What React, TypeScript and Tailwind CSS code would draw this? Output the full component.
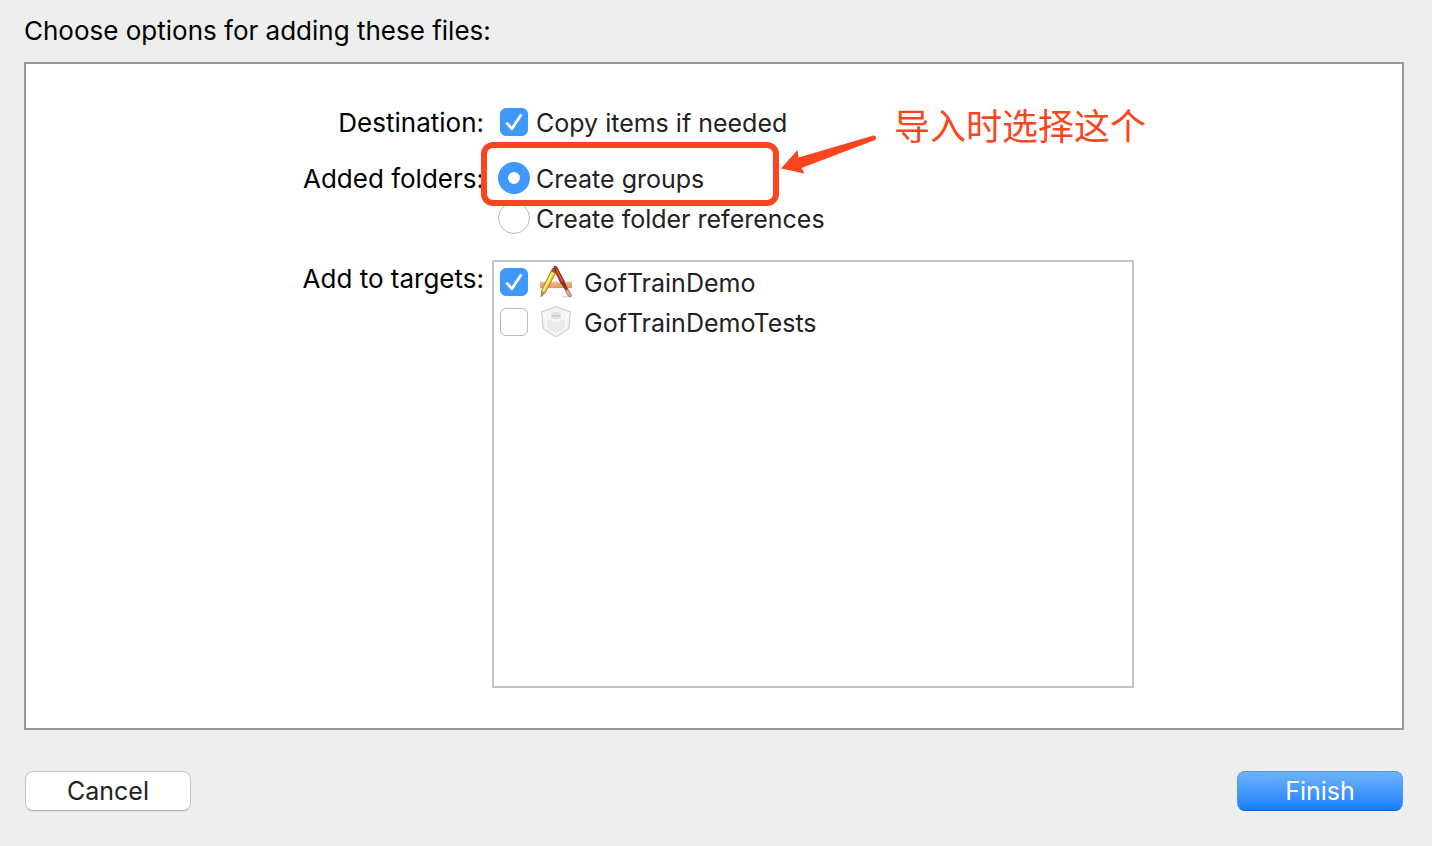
import React, { useState } from "react";

type CheckProps = {
  id: string;
  checked: boolean;
  onChange: (checked: boolean) => void;
};

function CheckBox({ id, checked, onChange }: CheckProps) {
  return (
    <span className="relative w-7 h-7 shrink-0">
      <input
        id={id}
        type="checkbox"
        checked={checked}
        onChange={(e) => onChange(e.target.checked)}
        className="block w-7 h-7 appearance-none rounded-md bg-white border border-[#b9b9b9] checked:bg-[#3f98fc] checked:border-[#3f98fc]"
      />
      {checked && (
        <svg viewBox="0 0 28 28" className="absolute inset-0 w-7 h-7 pointer-events-none" fill="none">
          <path d="M7.2 15.6 L12 20.8 L20.6 7.4" stroke="white" strokeWidth="2.8" strokeLinecap="round" strokeLinejoin="round" />
        </svg>
      )}
    </span>
  );
}

type RadioProps = {
  id: string;
  label: string;
  checked: boolean;
  onSelect: () => void;
};

function RadioRow({ id, label, checked, onSelect }: RadioProps) {
  return (
    <div className="flex items-center h-10 gap-1.5 pl-1.5">
      <input
        id={id}
        type="radio"
        name="added-folders"
        checked={checked}
        onChange={onSelect}
        className="w-8 h-8 shrink-0 appearance-none rounded-full bg-white border border-[#b9b9b9] checked:border-[10px] checked:border-[#3f98fc]"
      />
      <label htmlFor={id} className="pt-0.5 text-[#222]">{label}</label>
    </div>
  );
}

function AppIcon() {
  return (
    <svg viewBox="0 0 32 32" className="w-8 h-8 shrink-0" fill="none">
      <ellipse cx="26" cy="30.8" rx="5" ry="0.8" fill="#dedede" />
      <rect x="0" y="15.8" width="32.5" height="6.2" fill="#e2a678" />
      <path d="M0 16.6 H32" stroke="#eec09a" strokeWidth="1.4" />
      <path d="M0 21.6 H32" stroke="#cf9264" strokeWidth="0.8" />
      {/* pencil */}
      <path d="M11.4 4.6 L15.6 6.8 L5.4 26.6 L1.2 30.8 L1.6 24.6 Z" fill="#f4d53a" stroke="#8e6c1c" strokeWidth="0.8" strokeLinejoin="round" />
      <path d="M12.4 7 L3.2 25" stroke="#fff596" strokeWidth="1.2" />
      <path d="M14.8 7.8 L5 26" stroke="#c99a20" strokeWidth="0.7" />
      <path d="M11.4 4.6 L12.6 2.4 C14 1.6 16 2.6 16.4 4.4 L15.6 6.8 Z" fill="#c4583e" stroke="#7c3424" strokeWidth="0.6" />
      <path d="M1.6 25 L5.2 26.8 L1.2 30.8 Z" fill="#b98c5c" />
      {/* brush */}
      <path d="M14.2 0.2 L16.6 0.8 L24.4 15.6 L21 17.6 L15.4 5.6 Z" fill="#bd2d18" stroke="#64200f" strokeWidth="0.8" strokeLinejoin="round" />
      <path d="M16.6 4 L22.4 15.4" stroke="#ee7c5c" strokeWidth="0.9" />
      <path d="M21 17.6 L24.4 15.6 L28.2 23.4 L25.6 24.8 Z" fill="#8c2c1c" />
      <path d="M25.4 24.8 L28.4 23.2 L31.4 29 L30.8 31 L28.2 30 Z" fill="#dba48e" stroke="#a0644c" strokeWidth="0.7" />
    </svg>
  );
}

function TestsIcon() {
  return (
    <svg viewBox="0 0 32 32" className="w-8 h-8 shrink-0" fill="none">
      <path d="M16 0.6 L30.6 5.8 L28.8 22.6 L16 31 L3.2 22.6 L1.4 5.8 Z" fill="#f1f1f1" stroke="#c8c8c8" strokeWidth="1" strokeLinejoin="round" />
      <path d="M16 2 L28.6 6.6 L25.4 13.2 L16 16.8 L6.6 13.2 L3.4 6.6 Z" fill="#f4f4f4" />
      <path d="M6.6 13.2 L16 16.8 L25.4 13.2 L26.4 21.8 L16 28.6 L5.6 21.8 Z" fill="#ebebeb" />
      <path d="M3 7 L6.6 13.4 L5.6 21.8 L16 28.6 L26.4 21.8 L25.4 13.4 L29 7" stroke="#fcfcfc" strokeWidth="1.2" strokeLinejoin="round" />
      <ellipse cx="16" cy="9.4" rx="4.6" ry="3" fill="#e4e4e4" stroke="#d4d4d4" strokeWidth="0.7" />
      <path d="M12 9.8 H20" stroke="#c2c2c2" strokeWidth="1.2" />
    </svg>
  );
}

export default function App() {
  const [copyItems, setCopyItems] = useState(true);
  const [folderMode, setFolderMode] = useState("groups");
  const [targets, setTargets] = useState([
    { name: "GofTrainDemo", checked: true, icon: <AppIcon /> },
    { name: "GofTrainDemoTests", checked: false, icon: <TestsIcon /> },
  ]);

  const toggleTarget = (name: string, checked: boolean) => {
    setTargets(targets.map((t) => (t.name === name ? { ...t, checked } : t)));
  };

  return (
    <div className="min-h-screen bg-[#eeeeee] pl-6 pr-7 pb-9 font-['Inter',sans-serif] text-[25px] leading-[38px] text-black">
      <h1 className="py-3 text-[26px] leading-[38px]">Choose options for adding these files:</h1>

      <main className="bg-white border-2 border-[#999999] pt-[38px] pb-10">
        <div className="grid grid-cols-[190px_642px] justify-center gap-x-2">
          <div className="h-10 text-right whitespace-nowrap text-[26px] leading-[42px]">Destination:</div>
          <div className="flex items-center h-10 gap-2 pl-2">
            <CheckBox id="copy-items" checked={copyItems} onChange={setCopyItems} />
            <label htmlFor="copy-items" className="pt-0.5 text-[#222]">Copy items if needed</label>
          </div>

          <div className="mt-4 h-10 text-right whitespace-nowrap text-[26px] leading-[42px]">Added folders:</div>
          <div className="relative mt-4" role="radiogroup" aria-label="Added folders">
            <RadioRow id="create-groups" label="Create groups" checked={folderMode === "groups"} onSelect={() => setFolderMode("groups")} />
            <RadioRow id="create-refs" label="Create folder references" checked={folderMode === "refs"} onSelect={() => setFolderMode("refs")} />

            {/* Red callout over the first option */}
            <div className="absolute -top-4 -left-[11px] w-[298px] h-16 rounded-xl border-6 border-[#fb4420] pointer-events-none" />
            <div className="absolute -top-14 left-[288px] flex items-start pointer-events-none text-[#fb4420]">
              <svg viewBox="0 0 98 46" className="w-[98px] h-[46px] mt-7">
                <path d="M1 38.5 L17.5 20 L18.5 27.5 L93.5 5.6 A2.4 2.4 0 0 1 95 10 L21.5 38 L24.5 43.6 Z" fill="currentColor" />
              </svg>
              <span className="ml-4 font-['Noto_Sans_CJK_SC',sans-serif] text-[36px] leading-[44px] whitespace-nowrap">导入时选择这个</span>
            </div>
          </div>

          <div className="mt-[22px] h-10 text-right whitespace-nowrap text-[26px] leading-[38px]">Add to targets:</div>
          <ul className="mt-[22px] h-[428px] border-2 border-[#c0c4c6] overflow-y-auto">
            {targets.map((target) => (
              <li key={target.name} className="flex items-center h-10 pl-1.5">
                <CheckBox id={target.name} checked={target.checked} onChange={(v) => toggleTarget(target.name, v)} />
                <label htmlFor={target.name} className="flex items-center gap-3 ml-3 text-[#222]">
                  {target.icon}
                  <span className="pt-0.5">{target.name}</span>
                </label>
              </li>
            ))}
          </ul>
        </div>
      </main>

      <footer className="flex justify-between mt-[41px] px-px">
        <button className="w-[166px] h-10 rounded-lg bg-white border border-[#c8c8c8] border-b-[#b0b0b0] shadow-xs flex items-center justify-center text-[#222]">
          Cancel
        </button>
        <button className="w-[166px] h-10 rounded-lg bg-linear-to-b from-[#6cb3fa] to-[#147dff] border border-[#4a9bf0] border-b-[#1268e0] flex items-center justify-center text-white">
          Finish
        </button>
      </footer>
    </div>
  );
}
